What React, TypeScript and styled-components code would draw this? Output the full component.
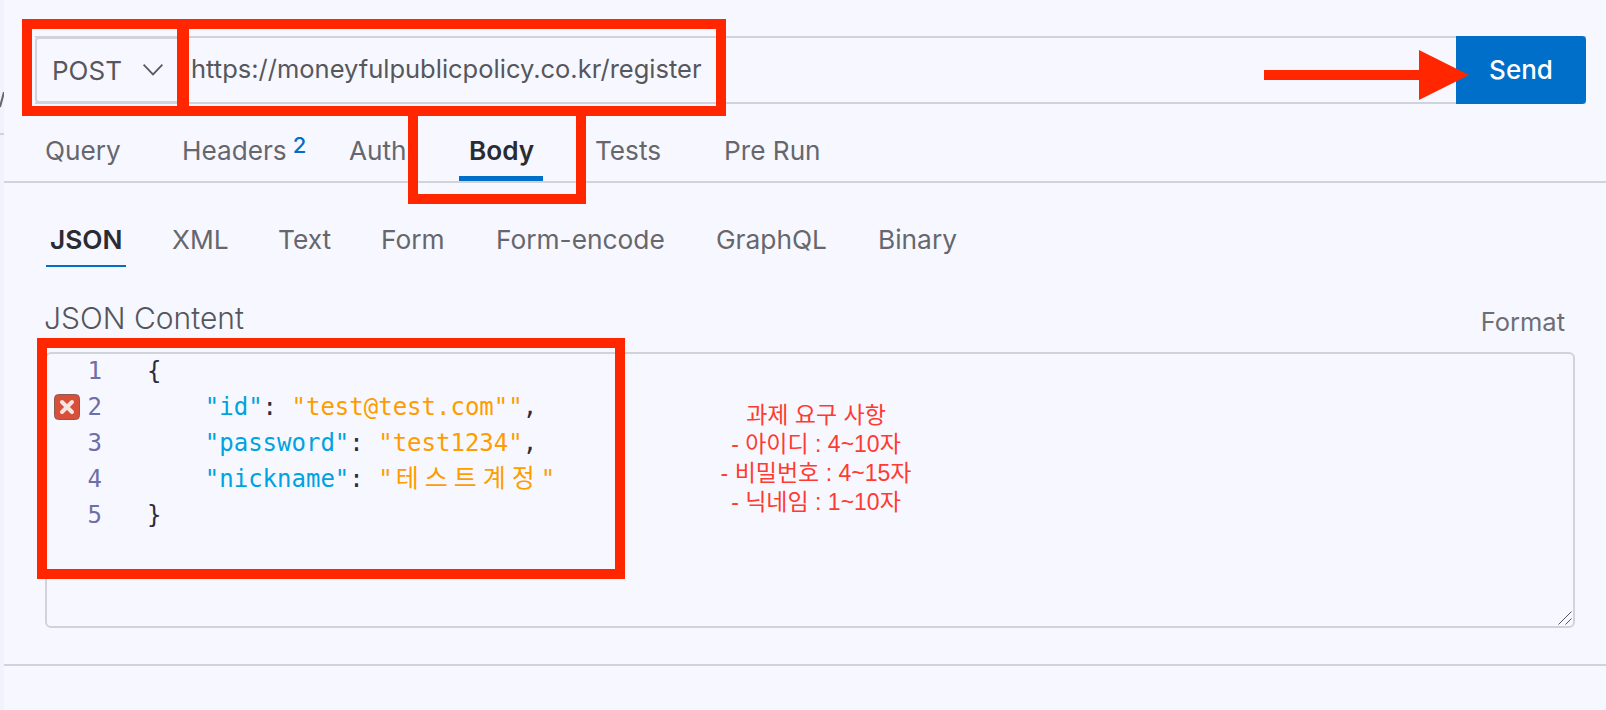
import { FC } from 'react';
import styled, { createGlobalStyle } from 'styled-components';

const GlobalStyle = createGlobalStyle`
  html, body {
    margin: 0;
    padding: 0;
    background: #f7f8ff;
  }
  * {
    box-sizing: border-box;
  }
`;

const UI_FONT = `Inter, 'Noto Sans', sans-serif`;
const LINE = '#d1d3da';
const BLUE = '#006fc9';
const MARK = '#ff2600';

const Page = styled.div`
  position: relative;
  width: 1606px;
  height: 710px;
  overflow: hidden;
  display: flex;
  background: #f7f8ff;
  font-family: ${UI_FONT};
`;

const SideEdge = styled.aside`
  width: 4px;
  flex: none;
  background: #f1f2fc;
  position: relative;
  overflow: hidden;
  &::after {
    content: '';
    position: absolute;
    left: 0;
    right: 0;
    top: 133px;
    height: 2px;
    background: ${LINE};
  }
`;

const SideSlash = styled.svg`
  position: absolute;
  left: 0;
  top: 92px;
`;

const Main = styled.main`
  flex: 1;
  display: flex;
  flex-direction: column;
  padding-top: 36px;
`;

const UrlBar = styled.div`
  display: flex;
  height: 68px;
  margin: 0 20px 0 31px;
  border-top: 2px solid ${LINE};
  border-bottom: 2px solid ${LINE};
`;

const MethodSelect = styled.div`
  width: 150px;
  flex: none;
  display: flex;
  align-items: center;
  justify-content: space-between;
  padding: 0 20px 0 15px;
  border: 2px solid ${LINE};
  border-radius: 4px;
  margin: -1px 0;
  font-size: 26px;
  color: #56575c;
`;

const UrlText = styled.div`
  flex: 1;
  display: flex;
  align-items: center;
  padding: 0 0 4px 6px;
  font-size: 25.5px;
  color: #56575c;
`;

const SendButton = styled.button`
  width: 130px;
  flex: none;
  margin: -2px 0;
  padding: 0 0 2px;
  border: none;
  border-radius: 0 4px 4px 0;
  background: ${BLUE};
  color: #fff;
  font-family: ${UI_FONT};
  font-size: 26px;
  font-weight: 500;
`;

const MainTabs = styled.nav`
  display: flex;
  height: 79px;
  padding-left: 41px;
  border-bottom: 2px solid ${LINE};
`;

const MainTab = styled.div<{ $active?: boolean; $width: number }>`
  width: ${(p) => p.$width}px;
  flex: none;
  position: relative;
  padding-top: 31px;
  font-size: 26.2px;
  line-height: 32px;
  font-weight: ${(p) => (p.$active ? 600 : 400)};
  color: ${(p) => (p.$active ? '#2a2b33' : '#66676d')};
  white-space: nowrap;
  sup {
    position: absolute;
    top: 29px;
    font-size: 22px;
    line-height: 24px;
    margin-left: 6px;
    color: ${BLUE};
    font-weight: 500;
  }
`;

const ActiveBar = styled.span`
  position: absolute;
  left: -10px;
  width: 84px;
  top: 72px;
  height: 5px;
  background: ${BLUE};
`;

const SubTabs = styled.div`
  display: flex;
  height: 84px;
  padding-left: 42px;
`;

const SubTab = styled.div<{ $active?: boolean; $width: number }>`
  width: ${(p) => p.$width}px;
  flex: none;
  position: relative;
  padding-top: 41px;
  padding-left: 4px;
  font-size: 26.3px;
  line-height: 32px;
  font-weight: ${(p) => (p.$active ? 600 : 400)};
  color: ${(p) => (p.$active ? '#2a2b33' : '#66676d')};
  white-space: nowrap;
`;

const SubUnderline = styled.span`
  position: absolute;
  left: 0;
  width: 80px;
  top: 82px;
  height: 2px;
  background: ${BLUE};
`;

const ContentHead = styled.div`
  display: flex;
  align-items: flex-end;
  justify-content: space-between;
  height: 85px;
  margin: 0 37px 0 40px;
  padding-bottom: 16px;
`;

const ContentTitle = styled.div`
  font-size: 30px;
  font-weight: 300;
  line-height: 36px;
  color: #55565c;
`;

const FormatLink = styled.div`
  font-size: 25.5px;
  line-height: 30px;
  color: #6d6e74;
  margin-right: 4px;
  margin-bottom: -1px;
`;

const Editor = styled.div`
  position: relative;
  height: 276px;
  margin: 0 31px 0 41px;
  border: 2px solid ${LINE};
  border-radius: 6px;
`;

const CodeList = styled.div`
  margin-top: -1px;
`;

const CodeLine = styled.div`
  position: relative;
  display: flex;
  align-items: center;
  height: 36px;
  font-family: 'DejaVu Sans Mono', 'Noto Sans CJK KR', monospace;
  font-size: 24px;
  line-height: 36px;
  color: #2a2d3e;
`;

const Gutter = styled.span`
  width: 100px;
  flex: none;
  text-align: right;
  padding-right: 45px;
  color: #6f6ea8;
`;

const Code = styled.span`
  white-space: pre;
`;

const Key = styled.span`
  color: #00a2e0;
`;

const Str = styled.span`
  color: #ff9c00;
`;

const Hangul = styled.span`
  font-size: 25px;
  letter-spacing: 6px;
  margin-left: 3px;
`;

const ErrorMark = styled.svg`
  position: absolute;
  left: 7px;
  top: 5px;
`;

const ResizeGrip = styled.svg`
  position: absolute;
  right: 1px;
  bottom: 1px;
`;

const Note = styled.div`
  position: absolute;
  left: 614px;
  top: 47px;
  width: 310px;
  text-align: center;
  font-family: 'Liberation Sans', 'Noto Sans CJK KR', sans-serif;
  font-size: 23px;
  line-height: 29px;
  color: #ff3b30;
`;

const BottomRule = styled.div`
  height: 2px;
  margin-top: 36px;
  background: ${LINE};
`;

// red annotations drawn on top of the screenshot
const MarkBox = styled.div<{ $x: number; $y: number; $w: number; $h: number }>`
  position: absolute;
  left: ${(p) => p.$x}px;
  top: ${(p) => p.$y}px;
  width: ${(p) => p.$w}px;
  height: ${(p) => p.$h}px;
  border: 10px solid ${MARK};
`;

const MarkArrow = styled.svg`
  position: absolute;
  left: 1264px;
  top: 50px;
`;

const tabs = [
  { label: 'Query', width: 137 },
  { label: 'Headers', width: 167, badge: '2' },
  { label: 'Auth', width: 120 },
  { label: 'Body', width: 126, active: true },
  { label: 'Tests', width: 129 },
  { label: 'Pre Run', width: 100 },
];

const subTabs = [
  { label: 'JSON', width: 122, active: true },
  { label: 'XML', width: 106 },
  { label: 'Text', width: 103 },
  { label: 'Form', width: 115 },
  { label: 'Form-encode', width: 220 },
  { label: 'GraphQL', width: 162 },
  { label: 'Binary', width: 100 },
];

const App: FC = () => {
  return (
    <Page>
      <GlobalStyle />
      <SideEdge>
        <SideSlash width="4" height="16" viewBox="0 0 4 16" fill="none" stroke="#66676d" strokeWidth="2">
          <path d="M4 0 0 15" />
        </SideSlash>
      </SideEdge>
      <Main>
        <UrlBar>
          <MethodSelect>
            POST
            <svg width="20" height="12" viewBox="0 0 20 12" fill="none" stroke="#56575c" strokeWidth="1.7">
              <path d="M.6.6 10 10.4 19.4.6" />
            </svg>
          </MethodSelect>
          <UrlText>https://moneyfulpublicpolicy.co.kr/register</UrlText>
          <SendButton>Send</SendButton>
        </UrlBar>
        <MainTabs>
          {tabs.map((tab) => (
            <MainTab key={tab.label} $active={tab.active} $width={tab.width}>
              {tab.label}
              {tab.badge && <sup>{tab.badge}</sup>}
              {tab.active && <ActiveBar />}
            </MainTab>
          ))}
        </MainTabs>
        <SubTabs>
          {subTabs.map((tab) => (
            <SubTab key={tab.label} $active={tab.active} $width={tab.width}>
              {tab.label}
              {tab.active && <SubUnderline />}
            </SubTab>
          ))}
        </SubTabs>
        <ContentHead>
          <ContentTitle>JSON Content</ContentTitle>
          <FormatLink>Format</FormatLink>
        </ContentHead>
        <Editor>
          <CodeList>
            <CodeLine>
              <Gutter>1</Gutter>
              <Code>{'{'}</Code>
            </CodeLine>
            <CodeLine>
              <ErrorMark width="26" height="26" viewBox="0 0 26 26">
                <rect x="0.5" y="0.5" width="25" height="25" rx="4" fill="#d8503a" stroke="#8d5a50" />
                <path d="M8 8l10 10M18 8 8 18" stroke="#f6e6e2" strokeWidth="4" strokeLinecap="round" />
              </ErrorMark>
              <Gutter>2</Gutter>
              <Code>
                {'    '}
                <Key>"id"</Key>: <Str>"test@test.com""</Str>,
              </Code>
            </CodeLine>
            <CodeLine>
              <Gutter>3</Gutter>
              <Code>
                {'    '}
                <Key>"password"</Key>: <Str>"test1234"</Str>,
              </Code>
            </CodeLine>
            <CodeLine>
              <Gutter>4</Gutter>
              <Code>
                {'    '}
                <Key>"nickname"</Key>: <Str>"<Hangul>테스트계정</Hangul>"</Str>
              </Code>
            </CodeLine>
            <CodeLine>
              <Gutter>5</Gutter>
              <Code>{'}'}</Code>
            </CodeLine>
          </CodeList>
          <Note>
            과제 요구 사항
            <br />- 아이디 : 4~10자
            <br />- 비밀번호 : 4~15자
            <br />- 닉네임 : 1~10자
          </Note>
          <ResizeGrip width="14" height="14" viewBox="0 0 14 14" fill="none" stroke="#55565c" strokeWidth="1">
            <path d="M.5 13.5 13.5.5M7.5 13.5l6-6" />
          </ResizeGrip>
        </Editor>
        <BottomRule />
      </Main>
      <MarkBox $x={22} $y={19} $w={167} $h={97} />
      <MarkBox $x={177} $y={19} $w={549} $h={97} />
      <MarkBox $x={408} $y={106} $w={178} $h={98} />
      <MarkBox $x={37} $y={338} $w={588} $h={241} />
      <MarkArrow width="205" height="50" viewBox="0 0 205 50">
        <path d="M0 20h155V0l50 25-50 25V30H0z" fill={MARK} />
      </MarkArrow>
    </Page>
  );
};

export default App;
